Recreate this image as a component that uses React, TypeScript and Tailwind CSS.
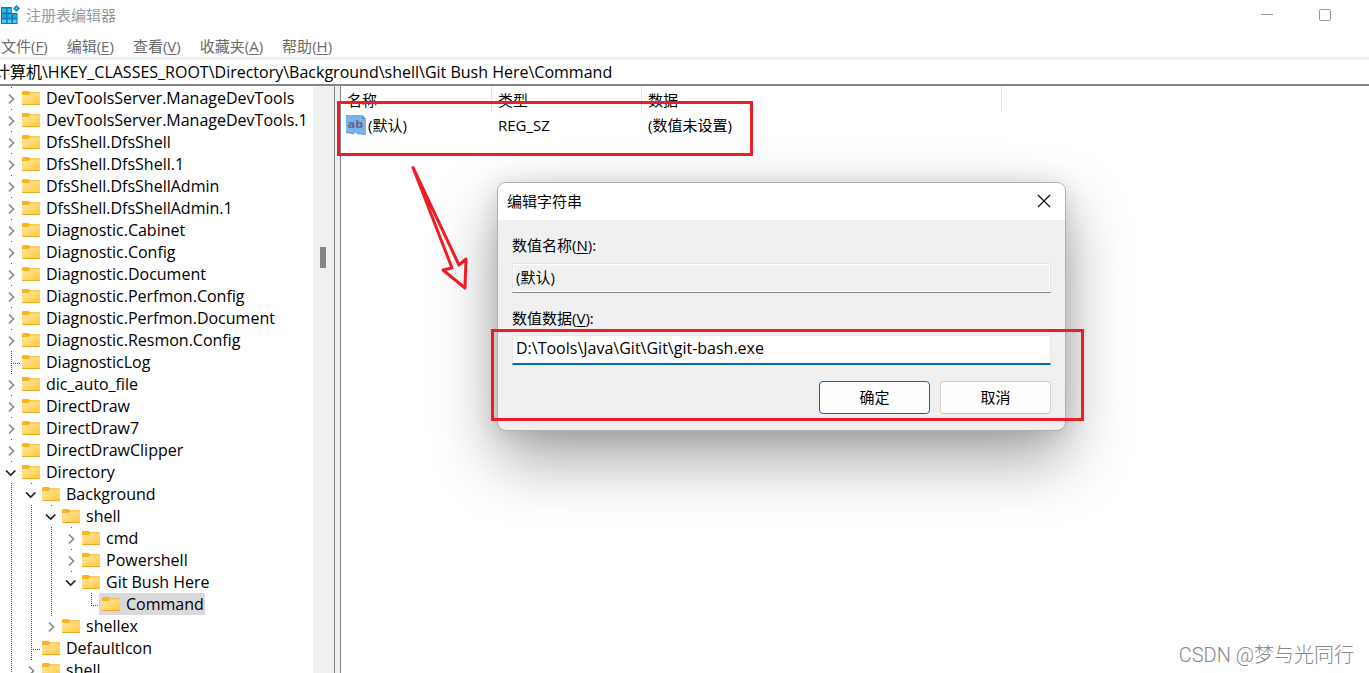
import { useState } from "react";

type TreeNode = {
  name: string;
  depth: number;
  state: "open" | "closed" | "leaf";
  guides?: number[];
  selected?: boolean;
};

const NODES: TreeNode[] = [
  { name: "DevToolsServer.ManageDevTools", depth: 0, state: "closed" },
  { name: "DevToolsServer.ManageDevTools.1", depth: 0, state: "closed" },
  { name: "DfsShell.DfsShell", depth: 0, state: "closed" },
  { name: "DfsShell.DfsShell.1", depth: 0, state: "closed" },
  { name: "DfsShell.DfsShellAdmin", depth: 0, state: "closed" },
  { name: "DfsShell.DfsShellAdmin.1", depth: 0, state: "closed" },
  { name: "Diagnostic.Cabinet", depth: 0, state: "closed" },
  { name: "Diagnostic.Config", depth: 0, state: "closed" },
  { name: "Diagnostic.Document", depth: 0, state: "closed" },
  { name: "Diagnostic.Perfmon.Config", depth: 0, state: "closed" },
  { name: "Diagnostic.Perfmon.Document", depth: 0, state: "closed" },
  { name: "Diagnostic.Resmon.Config", depth: 0, state: "closed" },
  { name: "DiagnosticLog", depth: 0, state: "leaf" },
  { name: "dic_auto_file", depth: 0, state: "closed" },
  { name: "DirectDraw", depth: 0, state: "closed" },
  { name: "DirectDraw7", depth: 0, state: "closed" },
  { name: "DirectDrawClipper", depth: 0, state: "closed" },
  { name: "Directory", depth: 0, state: "open" },
  { name: "Background", depth: 1, state: "open", guides: [0] },
  { name: "shell", depth: 2, state: "open", guides: [0, 1] },
  { name: "cmd", depth: 3, state: "closed", guides: [0, 1, 2] },
  { name: "Powershell", depth: 3, state: "closed", guides: [0, 1, 2] },
  { name: "Git Bush Here", depth: 3, state: "open", guides: [0, 1, 2] },
  { name: "Command", depth: 4, state: "leaf", guides: [0, 1, 2], selected: true },
  { name: "shellex", depth: 2, state: "closed", guides: [0, 1] },
  { name: "DefaultIcon", depth: 1, state: "leaf", guides: [0] },
  { name: "shell", depth: 1, state: "closed", guides: [0] },
];

const MENUS = [
  ["文件", "F"],
  ["编辑", "E"],
  ["查看", "V"],
  ["收藏夹", "A"],
  ["帮助", "H"],
];

const V_DOTS = "w-px bg-[repeating-linear-gradient(to_bottom,#555_0_1px,transparent_1px_2px)]";
const H_DOTS = "h-px bg-[repeating-linear-gradient(to_right,#555_0_1px,transparent_1px_2px)]";

function FolderIcon() {
  return (
    <svg width="18" height="14" viewBox="0 0 18 14" className="shrink-0" aria-hidden="true">
      <defs>
        <linearGradient id="folder" x1="0" y1="0" x2="1" y2="1">
          <stop offset="0" stopColor="#ffe9a6" />
          <stop offset="1" stopColor="#ffc93c" />
        </linearGradient>
      </defs>
      <path d="M0 1Q0 0 1 0H6Q7 0 8 1.3H17Q18 1.3 18 2.3V13H0Z" fill="#f8b51e" />
      <path d="M0 4H6.5L8.5 2.2H18V13H0Z" fill="url(#folder)" />
      <path d="M0 13H18V13.2Q18 14 17 14H1Q0 14 0 13.2Z" fill="#e9a825" />
    </svg>
  );
}

function Chevron({ open }: { open: boolean }) {
  return (
    <svg width="20" height="22" viewBox="0 0 20 22" className="block" fill="none" aria-hidden="true">
      {open ? (
        <path d="M5 9.5L9.7 14L14.4 9.5" stroke="#1a1a1a" strokeWidth="1.7" />
      ) : (
        <path d="M8 7.5L12.5 12L8 16.5" stroke="#8a8a8a" strokeWidth="1.7" />
      )}
      <path d="M10 0H11V1H10Z" fill="#555" />
    </svg>
  );
}

function TreeRow({ node }: { node: TreeNode }) {
  const columns = Array.from({ length: node.depth }, (_, i) => i);
  return (
    <li className="flex h-[22px] shrink-0" role="treeitem" aria-selected={!!node.selected}>
      {columns.map((i) => (
        <span key={i} className="flex w-5 shrink-0 pl-2.5">
          {node.guides?.includes(i) && <span className={V_DOTS} />}
        </span>
      ))}
      <span className="flex w-5 shrink-0">
        {node.state === "leaf" ? (
          <span className="flex pl-2.5">
            <span className={`${V_DOTS} ${node.selected ? "h-[13px]" : "h-full"}`} />
            <span className={`${H_DOTS} mt-3 ml-px w-[7px]`} />
          </span>
        ) : (
          <Chevron open={node.state === "open"} />
        )}
      </span>
      <button
        type="button"
        className={`-ml-0.5 flex h-[22px] items-center gap-1.5 rounded-xs pr-px pl-[3px] whitespace-nowrap ${
          node.selected ? "bg-[#d9d9d9]" : ""
        }`}
      >
        <FolderIcon />
        <span>{node.name}</span>
      </button>
    </li>
  );
}

function RegistryIcon() {
  return (
    <svg width="20" height="20" viewBox="0 0 20 20" aria-hidden="true">
      <path d="M1 2H12V8H17.5V19H1Z" fill="#0a78b4" />
      <path d="M2 3.5H6V7.5H2ZM7.5 3.5H11.5V7.5H7.5Z" fill="#35b8ee" />
      <path d="M2 9H6V13H2ZM7.5 9H11.5V13H7.5ZM13 9H16.5V13H13Z" fill="#1ea5e0" />
      <path d="M2 14.5H6V18H2ZM7.5 14.5H11.5V18H7.5ZM13 14.5H16.5V18H13Z" fill="#4dcdf8" />
      <path d="M16.5 0L20 3.5L16.5 7L13 3.5Z" fill="#0a86c4" />
      <path d="M16.5 2L18 3.5L16.5 5L15 3.5Z" fill="#43bdea" />
    </svg>
  );
}

function StringIcon() {
  return (
    <svg width="20" height="20" viewBox="0 0 20 20" className="shrink-0" aria-hidden="true">
      <path d="M0 0H16L20 4V20H17L15 18.5L12.5 19L9.5 17L7 19L4 18H0Z" fill="#78b4e6" />
      <path d="M16 0L20 4H16Z" fill="#4f8fca" />
      <path d="M0 17.5L4 18L7 19L9.5 17L12.5 19L15 18.5L17 20" stroke="#5f9fd6" fill="none" />
      <text x="9.5" y="13" textAnchor="middle" fontFamily="DejaVu Sans, sans-serif" fontSize="11" fontWeight="700" fill="#6b6290">
        ab
      </text>
    </svg>
  );
}

function EditDialog() {
  const [value, setValue] = useState("D:\\Tools\\Java\\Git\\Git\\git-bash.exe");
  return (
    <section
      role="dialog"
      aria-labelledby="dialog-title"
      className="absolute top-[182px] left-[497px] w-[569px] overflow-hidden rounded-[9px] border border-[#b0b0b0] bg-[#f0f0f0] shadow-[0_28px_64px_rgba(0,0,0,0.36),0_2px_24px_rgba(0,0,0,0.12)]"
    >
      <header className="flex h-[37px] items-center justify-between bg-white pr-[13px] pb-0.5 pl-[9px]">
        <h2 id="dialog-title">编辑字符串</h2>
        <button type="button" aria-label="关闭" className="flex size-4 items-center justify-center">
          <svg width="14" height="14" viewBox="0 0 14 14" fill="none" stroke="#111" strokeWidth="1.3">
            <path d="M1 1L13 13M13 1L1 13" />
          </svg>
        </button>
      </header>
      <div className="flex flex-col px-3.5 pt-3.5 pb-4">
        <label htmlFor="value-name" className="leading-[22px]">
          数值名称(<u className="underline-offset-2">N</u>):
        </label>
        <input
          id="value-name"
          readOnly
          value="(默认)"
          className="mt-[7px] h-[30px] w-full border border-[#e6e6e6] border-b-[#858585] bg-[#f0f0f0] px-[3px] pb-1 shadow-[inset_0_0_0_1px_#fff] outline-none"
        />
        <label htmlFor="value-data" className="mt-3.5 leading-[22px]">
          数值数据(<u className="underline-offset-2">V</u>):
        </label>
        <input
          id="value-data"
          value={value}
          onChange={(e) => setValue(e.target.value)}
          className="mt-1.5 h-[30px] w-full border border-b-2 border-[#e6e6e6] border-b-[#0067c0] bg-white px-[3px] pb-1 text-base outline-none"
        />
        <div className="mt-4 flex justify-end gap-2.5">
          <button type="button" className="h-[33px] w-[111px] rounded-[4px] border border-[#0067c0] bg-[#fdfdfd] pb-0.5">
            确定
          </button>
          <button type="button" className="h-[33px] w-[111px] rounded-[4px] border border-[#d0d0d0] border-b-[#bcbcbc] bg-[#fdfdfd] pb-0.5">
            取消
          </button>
        </div>
      </div>
    </section>
  );
}

export default function App() {
  return (
    <main className="relative flex h-screen flex-col overflow-hidden bg-white font-['Open_Sans','Noto_Sans_CJK_SC',sans-serif] text-[15px] leading-[22px] text-black">
      <header className="flex h-[31px] shrink-0 items-center justify-between pr-[15px]">
        <div className="flex items-center gap-1.5 pb-px text-[#999]">
          <RegistryIcon />
          <h1>注册表编辑器</h1>
        </div>
        <div className="flex text-[#999]">
          <button type="button" aria-label="最小化" className="flex h-[31px] w-[58px] items-center justify-center">
            <svg width="12" height="13" viewBox="0 0 12 13">
              <path d="M0 5.5H12" stroke="#999" />
            </svg>
          </button>
          <button type="button" aria-label="最大化" className="flex h-[31px] w-[58px] items-center justify-center">
            <svg width="12" height="13" viewBox="0 0 12 13" fill="none">
              <rect x="0.5" y="0.5" width="11" height="11" rx="1" stroke="#999" />
            </svg>
          </button>
        </div>
      </header>

      <nav className="flex h-[26px] shrink-0 gap-[19px] pt-1 pl-px text-[#6b6b6b]">
        {MENUS.map(([label, key]) => (
          <button key={key} type="button" className="h-[22px]">
            {label}(<u className="underline-offset-2">{key}</u>)
          </button>
        ))}
      </nav>

      <div className="h-[29px] shrink-0 border-t-3 border-b-2 border-t-[#f0f0f0] border-b-[#858388]">
        <input
          aria-label="地址"
          readOnly
          value="计算机\HKEY_CLASSES_ROOT\Directory\Background\shell\Git Bush Here\Command"
          className="-ml-1.5 block h-6 w-full text-base outline-none"
        />
      </div>

      <div className="flex min-h-0 flex-1">
        <div className="flex w-[335px] shrink-0 border-r border-[#858388]">
          <ul role="tree" className="flex min-w-0 flex-1 flex-col overflow-hidden pt-px pl-px text-base leading-[22px]">
            {NODES.map((node, i) => (
              <TreeRow key={i} node={node} />
            ))}
          </ul>
          <div className="w-[21px] shrink-0 bg-[#f0f0f0] pt-[161px] pl-[7px]">
            <div className="h-[21px] w-1.5 bg-[#858585]" />
          </div>
        </div>
        <div className="w-1.5 shrink-0 border-r border-[#858388] bg-[#f0f0f0]" />
        <div className="min-w-0 flex-1">
          <table className="table-fixed border-separate border-spacing-0 text-left">
            <colgroup>
              <col className="w-[151px]" />
              <col className="w-[150px]" />
              <col className="w-[360px]" />
            </colgroup>
            <thead>
              <tr className="h-[27px]">
                {["名称", "类型", "数据"].map((h) => (
                  <th key={h} className="border-r border-[#e5e5e5] p-0 pl-1.5 font-normal">
                    {h}
                  </th>
                ))}
              </tr>
            </thead>
            <tbody>
              <tr className="h-6">
                <td className="p-0 pl-[5px]">
                  <span className="flex items-center gap-0.5">
                    <StringIcon />
                    (默认)
                  </span>
                </td>
                <td className="p-0 pl-1.5">REG_SZ</td>
                <td className="p-0 pl-1.5">(数值未设置)</td>
              </tr>
            </tbody>
          </table>
        </div>
      </div>

      <EditDialog />

      <div className="pointer-events-none absolute top-[101px] left-[337px] h-[55px] w-[416px] border-3 border-[#ee1c25]" />
      <div className="pointer-events-none absolute top-[329px] left-[491px] h-[92px] w-[593px] border-3 border-[#ee1c25]" />
      <svg
        width="60"
        height="130"
        viewBox="0 0 60 130"
        className="pointer-events-none absolute top-[163px] left-[410px]"
        fill="none"
        stroke="#ee1c25"
        strokeWidth="3"
        strokeLinejoin="round"
        aria-hidden="true"
      >
        <path d="M3 4.5L42 105L33 107L55 125L56 96L49 102Z" />
      </svg>
      <p className="absolute right-[15px] bottom-[5px] font-[Roboto,'Noto_Sans_CJK_SC',sans-serif] text-[20px] leading-[26px] font-light text-[#888]">
        CSDN @梦与光同行
      </p>
    </main>
  );
}
